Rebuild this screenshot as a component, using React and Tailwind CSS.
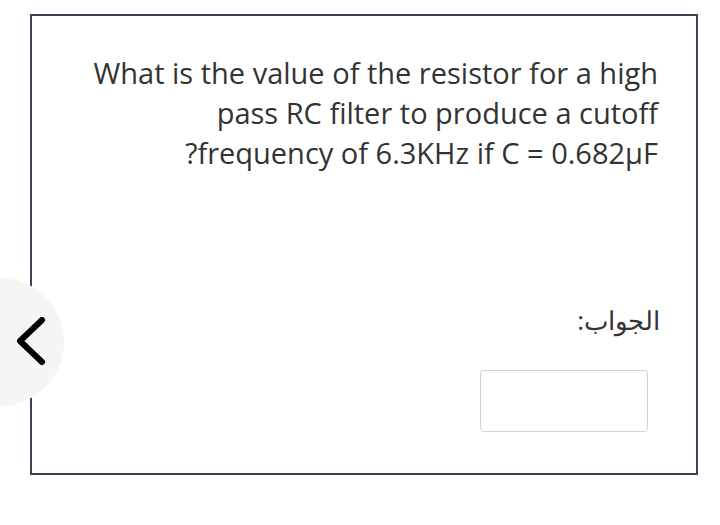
import React from "react";

export default function App() {
  return (
    <div className="relative w-[720px] h-[525px] bg-white overflow-hidden" style={{ fontFamily: '"Open Sans", "Noto Sans", sans-serif' }}>
      <div className="absolute left-[30px] top-[14px] w-[668px] h-[461px] border-2 border-[#3b4152] bg-white">
        <div dir="rtl" className="pt-[37px] pr-[38px] text-[29px] leading-[40px] text-[#333] text-right whitespace-nowrap">
          What is the value of the resistor for a high<br />
          pass RC filter to produce a cutoff<br />
          frequency of 6.3KHz if C = 0.682µF?
        </div>
        <div dir="rtl" className="mt-[129px] pr-[36px] text-[26px] leading-[36px] text-[#333]">الجواب:</div>
        <div dir="rtl" className="mt-[32px] pr-[48px]">
          <div className="w-[168px] h-[62px] border border-[#cfd3d6] rounded-[4px] bg-white"></div>
        </div>
      </div>
      <div className="absolute left-[-64px] top-[278px] w-[128px] h-[128px] rounded-full bg-[#f5f5f5] flex items-center justify-end">
        <svg width="30" height="50" viewBox="0 0 30 50" className="mr-[18px]">
          <polyline points="26,3 4,24 26,45" fill="none" stroke="#000" strokeWidth="6" strokeLinecap="round" strokeLinejoin="round" />
        </svg>
      </div>
    </div>
  );
}
